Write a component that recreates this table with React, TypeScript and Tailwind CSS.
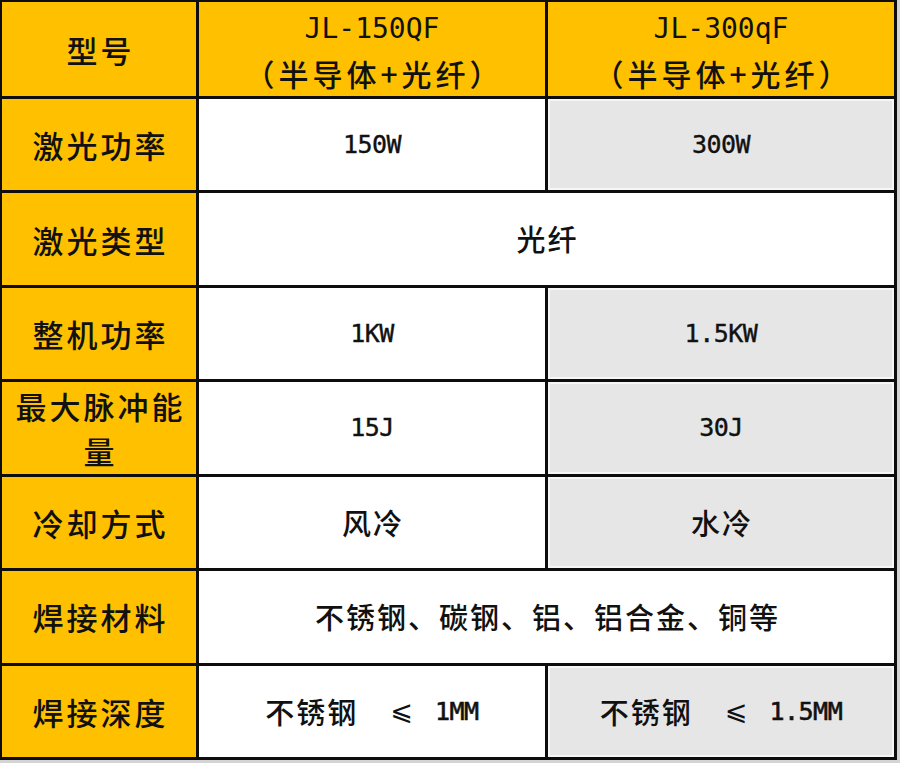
import React from "react";

const cjk = "font-['Noto_Sans_CJK_SC',sans-serif] font-medium";
const mono = "font-['DejaVu_Sans_Mono',monospace]";

type Row = {
  label: React.ReactNode;
  a: React.ReactNode;
  b?: React.ReactNode;
};

function Label({ children }: { children: React.ReactNode }) {
  return (
    <div
      className={`bg-[#ffc000] flex items-center justify-center text-center text-[31px] leading-[45px] tracking-[3px] pl-[3px] text-[#111] ${cjk}`}
    >
      <div>{children}</div>
    </div>
  );
}

function Value({
  children,
  gray = false,
  span = false,
}: {
  children: React.ReactNode;
  gray?: boolean;
  span?: boolean;
}) {
  return (
    <div
      className={`flex items-center justify-center text-center text-[#111] ${
        gray ? "bg-[#e6e6e6] shadow-[inset_0_0_0_2px_#f6f6f6]" : "bg-white"
      } ${span ? "col-span-2" : ""}`}
    >
      {children}
    </div>
  );
}

const Num = ({ children }: { children: React.ReactNode }) => (
  <span className={`${mono} text-[25px] tracking-[-0.5px] [-webkit-text-stroke:0.4px_#111]`}>{children}</span>
);

const Zh = ({ children }: { children: React.ReactNode }) => (
  <span className={`${cjk} text-[29px] tracking-[2px] pl-[2px]`}>{children}</span>
);

function Depth({ value }: { value: string }) {
  return (
    <span className="flex items-center">
      <span className={`${cjk} text-[29px] tracking-[2px]`}>不锈钢</span>
      <span className="ml-[32px] text-[27px] font-['DejaVu_Sans',sans-serif]">⩽</span>
      <span className={`ml-[22px] ${mono} text-[25px] tracking-[-0.5px] [-webkit-text-stroke:0.6px_#111]`}>{value}</span>
    </span>
  );
}

const rows: Row[] = [
  { label: "激光功率", a: <Num>150W</Num>, b: <Num>300W</Num> },
  { label: "激光类型", a: <Zh>光纤</Zh> },
  { label: "整机功率", a: <Num>1KW</Num>, b: <Num>1.5KW</Num> },
  {
    label: (
      <>
        最大脉冲能
        <br />量
      </>
    ),
    a: <Num>15J</Num>,
    b: <Num>30J</Num>,
  },
  { label: "冷却方式", a: <Zh>风冷</Zh>, b: <Zh>水冷</Zh> },
  { label: "焊接材料", a: <Zh>不锈钢、碳钢、铝、铝合金、铜等</Zh> },
  { label: "焊接深度", a: <Depth value="1MM" />, b: <Depth value="1.5MM" /> },
];

function Head({ model }: { model: string }) {
  return (
    <div className="bg-[#ffc000] flex items-center justify-center text-center text-[#111]">
      <div className="leading-[45px] pt-[4px]">
        <div className={`${mono} text-[28px]`}>{model}</div>
        <div className={`${cjk} text-[30px] tracking-[4px] pl-[4px]`}>（半导体+光纤）</div>
      </div>
    </div>
  );
}

export default function App() {
  return (
    <div className="w-[900px] h-[763px] bg-[#d4d4d4]">
      <div className="w-[897px] h-[760px] bg-[#0d0d0d] grid grid-cols-[194px_346px_346px] grid-rows-[repeat(8,1fr)] gap-[3px] pt-[2px] pl-[2px] pr-[3px] pb-[3px]">
        <Label>型号</Label>
        <Head model="JL-150QF" />
        <Head model="JL-300qF" />
        {rows.map((r, i) => (
          <React.Fragment key={i}>
            <Label>{r.label}</Label>
            {r.b === undefined ? (
              <Value span>{r.a}</Value>
            ) : (
              <>
                <Value>{r.a}</Value>
                <Value gray>{r.b}</Value>
              </>
            )}
          </React.Fragment>
        ))}
      </div>
    </div>
  );
}
